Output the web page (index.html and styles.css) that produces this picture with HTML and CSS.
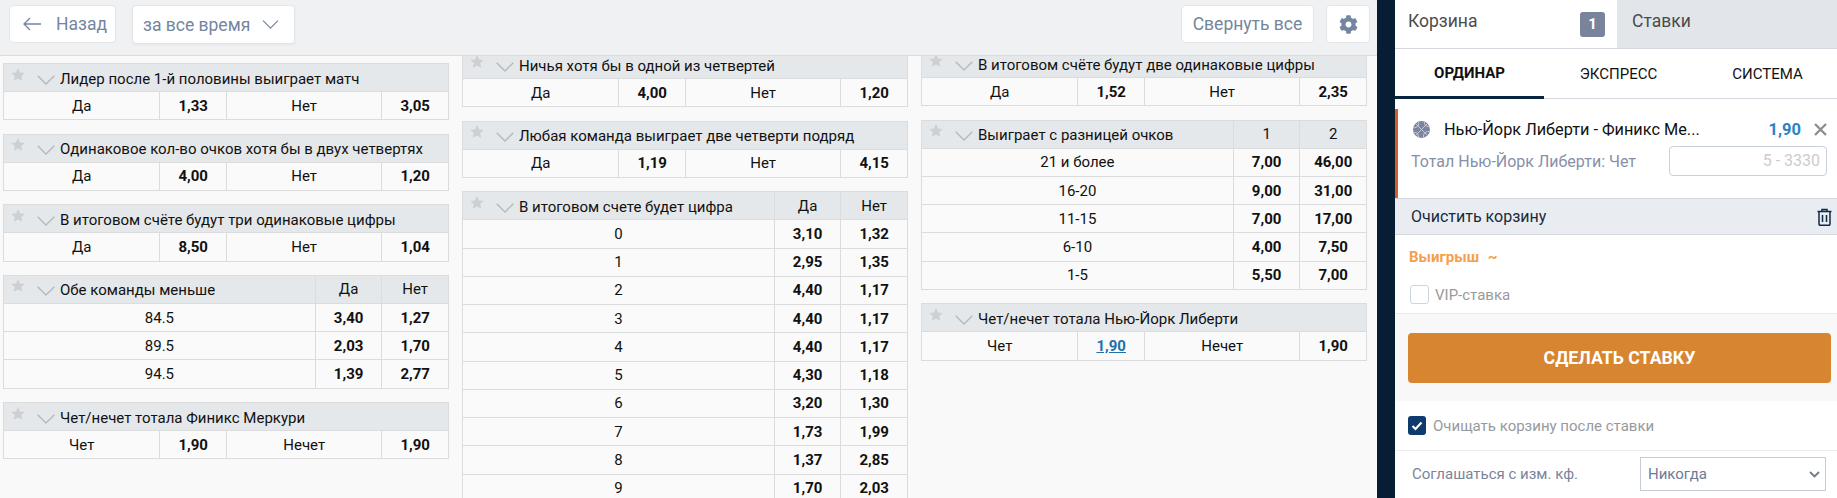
FILE: index.html
```html
<!DOCTYPE html>
<html lang="ru">
<head>
    <meta charset="UTF-8">
    <title>Ставки</title>
    <link rel="stylesheet" href="styles.css">
</head>
<body>
    <svg class="defs" width="0" height="0">
        <symbol id="star" viewBox="0 0 14 13"><path d="M7 0l2 4.400 4.800.5-3.600 3.200 1 4.700L7 10.400l-4.200 2.400 1-4.700L.2 4.900 5 4.400z"/></symbol>
        <symbol id="chev" viewBox="0 0 18 10"><path d="M.7.7L9 9l8.300-8.300" fill="none" stroke="currentColor" stroke-width="1.300"/></symbol>
    </svg>

    <div class="main">
        <div class="topbar">
            <button class="btn btn-back">
                <svg class="arrow" width="18" height="14" viewBox="0 0 18 14"><path d="M7 1L1 7l6 6M1 7h17" fill="none" stroke="currentColor" stroke-width="1.300"/></svg>
                Назад
            </button>
            <button class="btn btn-period">за все время <svg class="period-chev" width="17" height="9"><use href="#chev"/></svg></button>
            <button class="btn btn-collapse">Свернуть все</button>
            <button class="btn btn-gear">
                <svg width="19" height="19" viewBox="0 0 512 512"><path fill="currentColor" d="M487.400 315.700l-42.600-24.600c4.300-23.200 4.300-47 0-70.200l42.600-24.600c4.900-2.800 7.100-8.600 5.500-14-11.100-35.600-30-67.800-54.700-94.600-3.800-4.100-10-5.100-14.800-2.300L380.800 110c-17.900-15.400-38.500-27.300-60.800-35.100V25.800c0-5.600-3.900-10.500-9.400-11.700-36.700-8.200-74.300-7.800-109.200 0-5.500 1.200-9.400 6.100-9.400 11.700V75c-22.200 7.900-42.800 19.800-60.800 35.100L88.700 85.500c-4.900-2.800-11-1.900-14.800 2.300-24.700 26.700-43.600 58.900-54.700 94.600-1.700 5.400.6 11.200 5.500 14L67.300 221c-4.300 23.200-4.300 47 0 70.200l-42.600 24.600c-4.900 2.800-7.100 8.600-5.500 14 11.100 35.600 30 67.800 54.700 94.600 3.800 4.100 10 5.100 14.800 2.300l42.600-24.600c17.900 15.400 38.500 27.300 60.800 35.100v49.200c0 5.600 3.900 10.500 9.400 11.700 36.700 8.200 74.300 7.800 109.200 0 5.500-1.200 9.400-6.100 9.400-11.700v-49.200c22.200-7.900 42.800-19.800 60.800-35.100l42.600 24.600c4.900 2.800 11 1.900 14.800-2.300 24.700-26.700 43.600-58.900 54.700-94.600 1.500-5.500-.7-11.300-5.600-14.100zM256 336c-44.100 0-80-35.900-80-80s35.900-80 80-80 80 35.900 80 80-35.900 80-80 80z"/></svg>
            </button>
        </div>

        <div class="columns">
            <!-- left column -->
            <div class="col">
                <div class="market">
                    <div class="m-head"><div class="m-title"><svg class="star"><use href="#star"/></svg><svg class="chev"><use href="#chev"/></svg>Лидер после 1-й половины выиграет матч</div></div>
                    <div class="row row-4"><div>Да</div><div class="odd">1,33</div><div>Нет</div><div class="odd">3,05</div></div>
                </div>
                <div class="market">
                    <div class="m-head"><div class="m-title"><svg class="star"><use href="#star"/></svg><svg class="chev"><use href="#chev"/></svg>Одинаковое кол-во очков хотя бы в двух четвертях</div></div>
                    <div class="row row-4"><div>Да</div><div class="odd">4,00</div><div>Нет</div><div class="odd">1,20</div></div>
                </div>
                <div class="market">
                    <div class="m-head"><div class="m-title"><svg class="star"><use href="#star"/></svg><svg class="chev"><use href="#chev"/></svg>В итоговом счёте будут три одинаковые цифры</div></div>
                    <div class="row row-4"><div>Да</div><div class="odd">8,50</div><div>Нет</div><div class="odd">1,04</div></div>
                </div>
                <div class="market">
                    <div class="m-head row-3"><div class="m-title"><svg class="star"><use href="#star"/></svg><svg class="chev"><use href="#chev"/></svg>Обе команды меньше</div><div>Да</div><div>Нет</div></div>
                    <div class="row row-3"><div>84.5</div><div class="odd">3,40</div><div class="odd">1,27</div></div>
                    <div class="row row-3"><div>89.5</div><div class="odd">2,03</div><div class="odd">1,70</div></div>
                    <div class="row row-3"><div>94.5</div><div class="odd">1,39</div><div class="odd">2,77</div></div>
                </div>
                <div class="market">
                    <div class="m-head"><div class="m-title"><svg class="star"><use href="#star"/></svg><svg class="chev"><use href="#chev"/></svg>Чет/нечет тотала Финикс Меркури</div></div>
                    <div class="row row-4"><div>Чет</div><div class="odd">1,90</div><div>Нечет</div><div class="odd">1,90</div></div>
                </div>
            </div>

            <!-- middle column -->
            <div class="col col-mid">
                <div class="market">
                    <div class="m-head"><div class="m-title"><svg class="star"><use href="#star"/></svg><svg class="chev"><use href="#chev"/></svg>Ничья хотя бы в одной из четвертей</div></div>
                    <div class="row row-4"><div>Да</div><div class="odd">4,00</div><div>Нет</div><div class="odd">1,20</div></div>
                </div>
                <div class="market">
                    <div class="m-head"><div class="m-title"><svg class="star"><use href="#star"/></svg><svg class="chev"><use href="#chev"/></svg>Любая команда выиграет две четверти подряд</div></div>
                    <div class="row row-4"><div>Да</div><div class="odd">1,19</div><div>Нет</div><div class="odd">4,15</div></div>
                </div>
                <div class="market">
                    <div class="m-head row-3"><div class="m-title"><svg class="star"><use href="#star"/></svg><svg class="chev"><use href="#chev"/></svg>В итоговом счете будет цифра</div><div>Да</div><div>Нет</div></div>
                    <div class="row row-3"><div>0</div><div class="odd">3,10</div><div class="odd">1,32</div></div>
                    <div class="row row-3"><div>1</div><div class="odd">2,95</div><div class="odd">1,35</div></div>
                    <div class="row row-3"><div>2</div><div class="odd">4,40</div><div class="odd">1,17</div></div>
                    <div class="row row-3"><div>3</div><div class="odd">4,40</div><div class="odd">1,17</div></div>
                    <div class="row row-3"><div>4</div><div class="odd">4,40</div><div class="odd">1,17</div></div>
                    <div class="row row-3"><div>5</div><div class="odd">4,30</div><div class="odd">1,18</div></div>
                    <div class="row row-3"><div>6</div><div class="odd">3,20</div><div class="odd">1,30</div></div>
                    <div class="row row-3"><div>7</div><div class="odd">1,73</div><div class="odd">1,99</div></div>
                    <div class="row row-3"><div>8</div><div class="odd">1,37</div><div class="odd">2,85</div></div>
                    <div class="row row-3"><div>9</div><div class="odd">1,70</div><div class="odd">2,03</div></div>
                </div>
            </div>

            <!-- right column -->
            <div class="col col-right">
                <div class="market">
                    <div class="m-head"><div class="m-title"><svg class="star"><use href="#star"/></svg><svg class="chev"><use href="#chev"/></svg>В итоговом счёте будут две одинаковые цифры</div></div>
                    <div class="row row-4"><div>Да</div><div class="odd">1,52</div><div>Нет</div><div class="odd">2,35</div></div>
                </div>
                <div class="market">
                    <div class="m-head row-3"><div class="m-title"><svg class="star"><use href="#star"/></svg><svg class="chev"><use href="#chev"/></svg>Выиграет с разницей очков</div><div>1</div><div>2</div></div>
                    <div class="row row-3"><div>21 и более</div><div class="odd">7,00</div><div class="odd">46,00</div></div>
                    <div class="row row-3"><div>16-20</div><div class="odd">9,00</div><div class="odd">31,00</div></div>
                    <div class="row row-3"><div>11-15</div><div class="odd">7,00</div><div class="odd">17,00</div></div>
                    <div class="row row-3"><div>6-10</div><div class="odd">4,00</div><div class="odd">7,50</div></div>
                    <div class="row row-3"><div>1-5</div><div class="odd">5,50</div><div class="odd">7,00</div></div>
                </div>
                <div class="market">
                    <div class="m-head"><div class="m-title"><svg class="star"><use href="#star"/></svg><svg class="chev"><use href="#chev"/></svg>Чет/нечет тотала Нью-Йорк Либерти</div></div>
                    <div class="row row-4"><div>Чет</div><div class="odd odd-picked"><span>1,90</span></div><div>Нечет</div><div class="odd">1,90</div></div>
                </div>
            </div>
        </div>
    </div>

    <div class="strip"></div>

    <aside class="panel">
        <div class="tabs">
            <div class="tab tab-active">Корзина <span class="badge">1</span></div>
            <div class="tab">Ставки</div>
        </div>
        <div class="subtabs">
            <div class="subtab subtab-active">ОРДИНАР</div>
            <div class="subtab">ЭКСПРЕСС</div>
            <div class="subtab">СИСТЕМА</div>
        </div>

        <div class="bet">
            <div class="bet-top">
                <svg class="ball" width="17" height="17" viewBox="0 0 17 17">
                    <circle cx="8.500" cy="8.500" r="8.500" fill="#7c859f"/>
                    <path d="M2.500 2.500l12 12M14.500 2.500l-12 12M5.500 .8c1 3-1 6-4.700 6M16 10.500c-3.500-.2-6 2-5.500 5.800M11.500 .8c-.5 3 1 4.700 4.800 4.700M.8 11.500c3-.5 4.700 1 4.700 4.800" fill="none" stroke="#d5d9e2" stroke-width=".8"/>
                </svg>
                <span class="bet-name">Нью-Йорк Либерти - Финикс Ме...</span>
                <span class="bet-odd">1,90</span>
                <svg class="bet-close" width="13" height="13" viewBox="0 0 13 13"><path d="M1 1l11 11M12 1L1 12" stroke="#8e8e8e" stroke-width="2.400"/></svg>
            </div>
            <div class="bet-bottom">
                <span class="bet-desc">Тотал Нью-Йорк Либерти: Чет</span>
                <div class="bet-input">5 - 3330</div>
            </div>
        </div>

        <div class="clear-bar">
            Очистить корзину
            <svg width="15" height="18" viewBox="0 0 15 18"><path d="M.5 3.500h14M5 3.500V1.500h5v2M2 3.500v12.500a1.200 1.200 0 0 0 1.200 1.200h8.600A1.200 1.200 0 0 0 13 16V3.500M5.500 7v7M9.500 7v7" fill="none" stroke="#0c2a4a" stroke-width="1.500"/></svg>
        </div>

        <div class="win">Выигрыш <span class="win-val">~</span></div>

        <label class="vip"><span class="box"></span>VIP-ставка</label>

        <div class="submit-wrap">
            <button class="submit">СДЕЛАТЬ СТАВКУ</button>
        </div>

        <label class="clear-opt">
            <span class="box-on"><svg width="12" height="10" viewBox="0 0 12 10"><path d="M1.500 5l3 3 6-6.500" fill="none" stroke="#fff" stroke-width="2.200"/></svg></span>
            Очищать корзину после ставки
        </label>

        <div class="accept">
            <span class="accept-label">Соглашаться с изм. кф.</span>
            <div class="accept-select">Никогда
                <svg width="11" height="7" viewBox="0 0 11 7"><path d="M1 1l4.500 4.500L10 1" fill="none" stroke="#6d7b8f" stroke-width="1.800"/></svg>
            </div>
        </div>
    </aside>
</body>
</html>
```

FILE: styles.css
```css
* {
    box-sizing: border-box;
}

html, body {
    margin: 0;
    padding: 0;
    height: 498px;
    overflow: hidden;
}

body {
    display: flex;
    font-family: Roboto, "Liberation Sans", sans-serif;
    font-size: 15px;
    color: #111;
    background: #f9f9f9;
}

.defs {
    position: absolute;
}

.main {
    width: 1377px;
    height: 498px;
    overflow: hidden;
}

/* top bar */
.topbar {
    position: relative;
    z-index: 2;
    display: flex;
    align-items: flex-start;
    height: 56px;
    padding: 5px 7px 0 9px;
    background: #eff1f3;
    border-bottom: 1px solid #d9dde1;
}

.btn {
    display: flex;
    align-items: center;
    height: 38px;
    padding: 0;
    font-family: inherit;
    font-size: 17.5px;
    color: #7485a0;
    background: #fff;
    border: 1px solid #e3e5e8;
    border-radius: 4px;
}

.btn-back {
    width: 107px;
    padding-left: 13px;
}

.arrow {
    margin-right: 15px;
}

.btn-period {
    width: 163px;
    height: 39px;
    margin-left: 16px;
    padding-left: 10px;
    box-shadow: 0 1px 3px rgba(0, 0, 0, 0.05);
}

.period-chev {
    margin-left: 12px;
}

.btn-collapse {
    width: 133px;
    margin-left: auto;
    justify-content: center;
}

.btn-gear {
    width: 44px;
    margin-left: 12px;
    justify-content: center;
}

/* markets */
.columns {
    display: flex;
    gap: 13px;
    padding: 7px 10px 0 3px;
}

.col {
    flex: 1;
    min-width: 0;
}

.col-mid {
    margin-top: -13px;
}

.col-right {
    margin-top: -14px;
}

.market {
    margin-bottom: 13.4px;
    background: #fafafa;
    border: 1px solid #dcdcdc;
}

.m-head {
    display: grid;
    height: 27px;
    background: #e5e8ea;
}

.m-title {
    display: flex;
    align-items: center;
    padding-top: 2px;
    white-space: nowrap;
}

.star {
    width: 14px;
    height: 13px;
    margin: -9px 0 0 7px;
    fill: #cdcfd3;
}

.chev {
    width: 18px;
    height: 10px;
    margin: 2px 5px 0 12px;
    color: #b5b9bd;
}

.row {
    display: grid;
    height: 28.25px;
    border-top: 1px solid #dcdcdc;
}

.row-4 {
    grid-template-columns: 35fr 15fr 35fr 15fr;
}

.row-3 {
    grid-template-columns: 70fr 15fr 15fr;
}

.row > div, .m-head > div:not(.m-title) {
    display: flex;
    align-items: center;
    justify-content: center;
}

.row > div + div, .m-head > div + div {
    border-left: 1px solid #dcdcdc;
}

.odd {
    font-weight: 700;
}

.odd-picked span {
    color: #1f6fa8;
    text-decoration: underline;
}

.strip {
    width: 18px;
    background: #071d33;
}

/* bet panel */
.panel {
    width: 442px;
    height: 498px;
    overflow: hidden;
    background: #fff;
}

.tabs {
    display: flex;
    height: 49px;
    border-bottom: 1px solid #d3d8df;
}

.tab {
    flex: 1;
    display: flex;
    align-items: center;
    justify-content: space-between;
    padding: 0 12px 6px 14px;
    font-size: 17.5px;
    color: #4b4b4b;
    background: #e2e6eb;
}

.tab-active {
    flex: 0 0 223px;
    background: #fff;
    border-right: 1px solid #e2e6eb;
    padding-left: 13px;
}

.badge {
    display: flex;
    align-items: center;
    justify-content: center;
    width: 25px;
    height: 25px;
    margin-top: 6px;
    font-size: 15px;
    font-weight: 700;
    color: #fff;
    background: #7a839c;
    border-radius: 3px;
}

.subtabs {
    display: flex;
    height: 50px;
    border-bottom: 1px solid #d3d8df;
}

.subtab {
    flex: 0 0 149px;
    display: flex;
    align-items: center;
    justify-content: center;
    margin-bottom: -1px;
}

.subtab-active {
    font-weight: 700;
    border-bottom: 3px solid #0a2540;
}

.bet {
    height: 89px;
    margin-top: 10px;
    padding: 12px 10px 0 13px;
    border-left: 3px solid #d2602a;
}

.bet-top {
    display: flex;
    align-items: center;
    height: 17px;
}

.ball {
    margin-left: 2px;
}

.bet-name {
    margin-left: 14px;
    font-size: 16.3px;
}

.bet-odd {
    margin-left: auto;
    font-size: 16.5px;
    font-weight: 700;
    color: #2a83c4;
}

.bet-close {
    margin-left: 13px;
}

.bet-bottom {
    display: flex;
    align-items: center;
    justify-content: space-between;
    margin-top: 8px;
}

.bet-desc {
    font-size: 16px;
    color: #8790a8;
}

.bet-input {
    width: 158px;
    height: 30px;
    padding: 0 6px;
    font-size: 16px;
    line-height: 28px;
    text-align: right;
    color: #ccc;
    border: 1px solid #c9d0da;
    border-radius: 4px;
}

.clear-bar {
    display: flex;
    align-items: center;
    justify-content: space-between;
    height: 37px;
    padding: 0 5px 0 16px;
    font-size: 16px;
    color: #1a2a3a;
    background: #e9edf2;
    border-top: 1px solid #d3d8df;
    border-bottom: 1px solid #d3d8df;
}

.win {
    padding: 13px 0 0 14px;
    font-weight: 700;
    color: #f5a04a;
}

.win-val {
    margin-left: 5px;
}

.vip {
    display: flex;
    align-items: center;
    height: 19px;
    margin: 19px 0 9px 15px;
    color: #9a9a9a;
}

.box {
    width: 19px;
    height: 19px;
    margin-right: 6px;
    background: #fff;
    border: 1px solid #ccd5e0;
    border-radius: 3px;
}

.submit-wrap {
    height: 88px;
    padding: 19px 6px 0 13px;
    background: #f8f8f8;
    border-top: 1px solid #ebebeb;
}

.submit {
    width: 100%;
    height: 50px;
    font-family: inherit;
    font-size: 17.7px;
    font-weight: 700;
    color: #fff;
    background: #d78530;
    border: none;
    border-radius: 4px;
}

.clear-opt {
    display: flex;
    align-items: center;
    height: 50px;
    padding: 0 0 0 13px;
    font-size: 15px;
    color: #98999f;
    border-bottom: 1px solid #ebebeb;
}

.box-on {
    display: flex;
    align-items: center;
    justify-content: center;
    width: 18px;
    height: 19px;
    margin-right: 7px;
    background: #0f3a6d;
    border-radius: 3px;
}

.accept {
    display: flex;
    align-items: center;
    justify-content: space-between;
    height: 46px;
    padding: 0 11px 0 17px;
}

.accept-label {
    color: #7b8499;
}

.accept-select {
    display: flex;
    align-items: center;
    justify-content: space-between;
    width: 186px;
    height: 34px;
    padding: 0 5px 0 7px;
    color: #6d7b96;
    border: 1px solid #c5ccd8;
}
```
